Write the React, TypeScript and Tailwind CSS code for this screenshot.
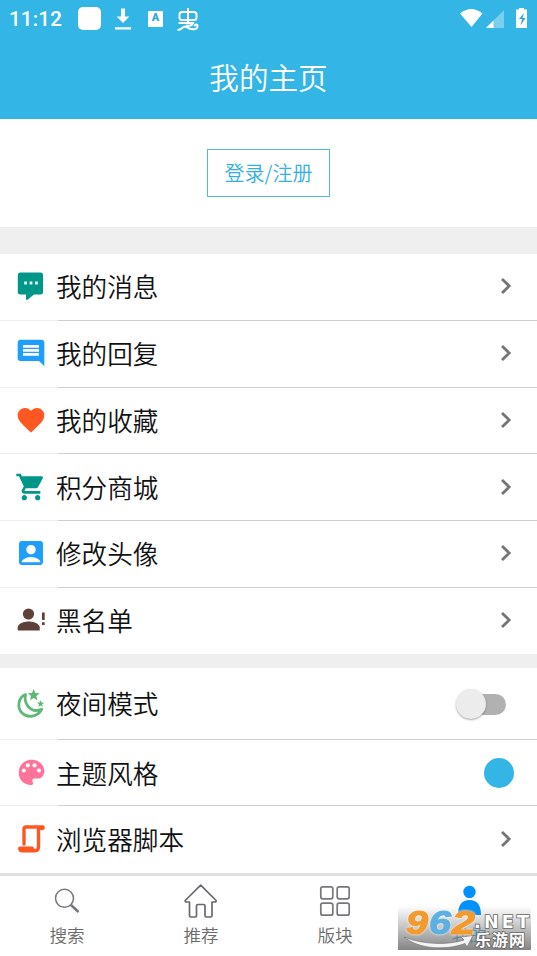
import classNames from "clsx";
import * as React from "react";
import { MdAccountBox, MdComment, MdFavorite, MdShoppingCart } from "react-icons/md";

interface MenuItem {
    label: string;
    icon: React.ReactNode;
    height: string;
    control?: React.ReactNode;
}

const MessageIcon = () => (
    <svg className="size-8" viewBox="0 0 32 32">
        <path
            fill="#009688"
            d="M5 2.500h20.500a2.500 2.500 0 0 1 2.500 2.500v17a2.500 2.500 0 0 1-2.500 2.500H19l-6.500 5.200q-1.300.8-1.500-1V24.500H5.300a2.500 2.500 0 0 1-2.500-2.500v-17A2.500 2.500 0 0 1 5 2.500z"
        />
        <path fill="#e5fffb" d="M9.200 11.500h2.800v3H9.200zM14.600 11.500h2.800v3h-2.800zM20 11.500h2.800v3H20z" />
    </svg>
);

const BlacklistIcon = () => (
    <svg className="size-8" viewBox="0 0 32 32" fill="#5d4037">
        <circle cx="13.500" cy="10" r="5.600" />
        <path d="M2.700 26.500v-3c0-4 6.500-6 11-6s11 2 11 6v3z" />
        <path d="M27 8.500h2.700v7.500H27zM27 18.200h2.700v2.700H27z" />
    </svg>
);

const NightIcon = () => (
    <svg className="size-8" viewBox="0 -2 32 32">
        <path
            d="M10.500 5.500C2.800 8.600 2 19 7 24c5.500 5.200 15.500 4.200 19.700-3.700-5.500 2.200-10.500.9-13.700-3-2.700-3.300-3.400-7.300-2.500-11.800z"
            fill="none"
            stroke="#5fb878"
            strokeWidth="2.800"
            strokeLinejoin="round"
        />
        <path
            fill="#5fb878"
            d="m18.700 0 1.700 3.900 4.300.3-3.300 2.800 1 4.300-3.700-2.300-3.700 2.300 1-4.300-3.200-2.800 4.200-.3zM25.500 11.300l1 2.200 2.500.2-1.900 1.700.6 2.500-2.200-1.400-2.100 1.400.6-2.500-1.900-1.700 2.400-.2z"
        />
    </svg>
);

const PaletteIcon = () => (
    <svg className="size-8" viewBox="0 0 32 32">
        <path
            fill="#ff7299"
            d="M16.500 2.800C9 2.800 3.700 8.500 3.700 15.500c0 7 5.300 12.500 12.300 12.500 2.800 0 2-2.300 1.500-3.600-.7-2 .2-2.900 2-2.900h3.300c4 0 6.500-3.400 6.500-7.300C29.300 7.500 23.500 2.800 16.500 2.800z"
        />
        <g fill="white">
            <circle cx="8.800" cy="13.500" r="2.100" />
            <circle cx="12.800" cy="8.400" r="2.100" />
            <circle cx="19.500" cy="8.400" r="2.100" />
            <circle cx="23.900" cy="13.500" r="2.100" />
        </g>
    </svg>
);

const ScriptIcon = () => (
    <svg
        className="size-8"
        viewBox="0 0 32 32"
        fill="none"
        stroke="#ff5722"
        strokeWidth="3.400"
        strokeLinecap="round"
        strokeLinejoin="round"
    >
        <path d="M9 21V6q0-2 2-2h17" />
        <path d="M28 5.200h-4.500v18.600q0 4-3.500 4-2.500 0-2.800-2.600H4.800q0 2.600 2.500 2.600H20" />
    </svg>
);

const Chevron = () => (
    <svg className="mr-6 h-5 w-4" viewBox="0 0 16 20" fill="none" stroke="#757575" strokeWidth="2.800">
        <path d="m5 3 7.200 7L5 17" />
    </svg>
);

const Switch = () => (
    <div className="relative mr-[31px] mt-[3px] h-[21px] w-[46px] rounded-full bg-[#b1b1b1]">
        <span className="absolute -left-1 -top-[5px] size-[30px] rounded-full bg-[#ececec] shadow-[0_1px_2px_rgba(0,0,0,0.35)]" />
    </div>
);

const accountItems: MenuItem[] = [
    { label: "我的消息", icon: <MessageIcon />, height: "h-[67px] pb-[3px]" },
    { label: "我的回复", icon: <MdComment className="size-8 text-[#1e9fff]" />, height: "h-[67px] pb-[3px]" },
    { label: "我的收藏", icon: <MdFavorite className="size-8 text-[#ff5722]" />, height: "h-[66px] pb-[2px]" },
    { label: "积分商城", icon: <MdShoppingCart className="size-8 text-[#009688]" />, height: "h-[67px] pb-px" },
    { label: "修改头像", icon: <MdAccountBox className="size-8 text-[#1e9fff]" />, height: "h-[67px] pb-[3px]" },
    { label: "黑名单", icon: <BlacklistIcon />, height: "h-[66px] pb-[2px]" }
];

const settingItems: MenuItem[] = [
    { label: "夜间模式", icon: <NightIcon />, height: "h-[72px] pb-[2px]", control: <Switch /> },
    {
        label: "主题风格",
        icon: <PaletteIcon />,
        height: "h-[66px]",
        control: <span className="mr-[23px] size-[30px] rounded-full bg-[#33b5e5]" />
    },
    { label: "浏览器脚本", icon: <ScriptIcon />, height: "h-[67px] pb-[2px]" }
];

const MenuList = ({ items }: { items: MenuItem[] }) => (
    <ul className="bg-white">
        {items.map((item, index) => (
            <li key={item.label}>
                <div className={classNames("flex items-center", item.height, index < items.length - 1 && "-mb-px")}>
                    <span className="ml-[15px] w-8 shrink-0">{item.icon}</span>
                    <span className="ml-[9px] flex-1 text-[25.6px] leading-8 font-[350] text-[#111]">{item.label}</span>
                    {item.control ?? <Chevron />}
                </div>
                {index < items.length - 1 && (
                    <div className="flex h-px">
                        <span className="w-[58px] bg-[#eeeeee]" />
                        <span className="flex-1 bg-[#cfcfcf]" />
                    </div>
                )}
            </li>
        ))}
    </ul>
);

const StatusBar = () => (
    <div className="flex h-[37px] items-center text-white">
        <span className="ml-[9px] w-[69px] pt-px font-[Roboto,sans-serif] text-[20.5px] font-medium tracking-[0.2px]">11:12</span>
        <span className="size-[23px] rounded-[5px] bg-white" />
        <svg className="ml-[14px] h-6 w-[16px]" viewBox="0 0 16 24" fill="white">
            <path d="M6 1.500h4v8h4.400L8 16 1.600 9.500H6zM0 20.200h16V22.400H0z" />
        </svg>
        <span className="ml-[17px] flex h-4 w-[15px] items-center justify-center rounded-[1px] bg-white font-[Roboto,sans-serif] text-[11px] font-black text-[#33a5d8]">
            A
        </span>
        <svg className="ml-[13px] h-6 w-[24px]" viewBox="0 0 24 24" fill="none" stroke="white" strokeWidth="2">
            <rect x="3.500" y="5" width="17" height="8" rx="2.500" />
            <path d="M12 1v14.500M2.500 16h14.500c-1 3.200-4 3.200-7 2.500M1.500 23c5 0 5-5 9-3 4 3 11 3.500 11-1 0-2.200-3-1.800-2.700.3" />
        </svg>
        <svg className="ml-auto mr-[8px] h-[22px] w-[70px]" viewBox="459 7 70 22" fill="white">
            <path d="M460 12.500q11-9 22.500 0L471.500 26z" />
            <path opacity=".35" d="M504 9v18h-18z" />
            <path d="M493.500 19.500V27H486z" />
            <path d="M517 8.500h2V7h5v1.500h3V27h-11V8.500z" />
            <path fill="#33a5d8" d="m524 12-5 6h3l-1.500 6.500 5-7.500h-3z" />
        </svg>
    </div>
);

const SearchIcon = () => (
    <svg className="size-9" viewBox="0 0 36 36" fill="none" stroke="#76767c">
        <circle cx="15.500" cy="15.300" r="9" strokeWidth="1.500" />
        <path d="m22 22 7.500 7" strokeWidth="2.500" />
    </svg>
);

const HomeIcon = () => (
    <svg className="size-9" viewBox="0 0 36 36" fill="none" stroke="#68686e" strokeWidth="1.700" strokeLinejoin="round">
        <path d="M17.700 2.200 2.200 17.500q-.3 1.500 1.500 1.500h2.800v13.500q0 1.500 1.500 1.500h4q1.500 0 1.500-1.500V23q0-1.500 1.500-1.500h5.500q1.500 0 1.500 1.500v9.500q0 1.500 1.500 1.500h4q1.500 0 1.500-1.500V19h2.800q1.600 0 1.300-1.500z" />
    </svg>
);

const GridIcon = () => (
    <svg className="size-9" viewBox="0 0 36 36" fill="none" stroke="#77777d" strokeWidth="1.700">
        <rect x="3.800" y="3.800" width="12" height="12" rx="2" />
        <rect x="20.200" y="3.800" width="12" height="12" rx="2" />
        <rect x="3.800" y="20.200" width="12" height="12" rx="2" />
        <rect x="20.200" y="20.200" width="12" height="12" rx="2" />
    </svg>
);

const UserIcon = () => (
    <svg className="size-9" viewBox="0 0 36 36" fill="#0091ff">
        <circle cx="18.500" cy="9" r="6.200" />
        <path d="M7 32c0-10 4-15 11.500-15S30 22 30 32z" />
    </svg>
);

const tabs = [
    { label: "搜索", icon: <SearchIcon /> },
    { label: "推荐", icon: <HomeIcon /> },
    { label: "版块", icon: <GridIcon /> },
    { label: "我的", icon: <UserIcon />, active: true }
];

const Watermark = () => (
    <svg className="absolute bottom-[6px] right-[6px] h-[46px] w-[133px]" viewBox="398 904 133 46">
        <defs>
            <linearGradient id="shade" x1="0" y1="0" x2="0" y2="1">
                <stop offset="0" stopColor="#777" stopOpacity="0" />
                <stop offset="1" stopColor="#777" stopOpacity=".9" />
            </linearGradient>
        </defs>
        <rect x="398" y="906" width="133" height="44" fill="url(#shade)" />
        <path
            d="M404 937c20 8 45 8 60 3l-3-3 12-1.500-6 11.500-2-3.500c-18 7-46 6-61-6.500z"
            fill="#f4f4f4"
            stroke="#777"
            strokeWidth=".7"
        />
        <g
            className="drop-shadow-[0_0_1px_white]"
            fontFamily="'Liberation Sans', sans-serif"
            fontWeight="700"
            fontStyle="italic"
            fontSize="33"
            strokeWidth="1.200"
        >
            <text x="406" y="934" textLength="22" lengthAdjust="spacingAndGlyphs" fill="#f39a2e" stroke="#f39a2e">9</text>
            <text x="429" y="934" textLength="22" lengthAdjust="spacingAndGlyphs" fill="#5cb0e2" stroke="#5cb0e2">6</text>
            <text x="452" y="934" textLength="23" lengthAdjust="spacingAndGlyphs" fill="#f39a2e" stroke="#f39a2e">2</text>
        </g>
        <g fill="white" stroke="#666" strokeWidth="1.600" paintOrder="stroke" fontWeight="700">
            <text
                x="474"
                y="928"
                textLength="55"
                lengthAdjust="spacing"
                fontFamily="'DejaVu Sans', sans-serif"
                fontSize="17.500"
            >
                .NET
            </text>
            <text x="475" y="946" textLength="50" fontFamily="'Noto Sans CJK SC', sans-serif" fontSize="16">乐游网</text>
        </g>
    </svg>
);

const App = () => (
    <div className="relative flex h-[956px] w-[537px] flex-col overflow-hidden bg-[#efefef] font-['Noto_Sans_CJK_SC',sans-serif]">
        <header className="h-[119px] shrink-0 bg-[#33b5e5]">
            <StatusBar />
            <h1 className="text-center text-[29.6px] leading-[80px] font-[350] text-white">我的主页</h1>
        </header>

        <section className="mb-[27px] flex h-[108px] shrink-0 items-center justify-center bg-white">
            <button className="h-12 w-[123px] border border-[#52b9de] text-[20px] font-[350] text-[#33b0e0]">登录/注册</button>
        </section>

        <MenuList items={accountItems} />
        <div className="h-[14px] shrink-0" />
        <MenuList items={settingItems} />

        <nav className="grid flex-1 grid-cols-4 border-t-[3px] border-[#e0e0e0] bg-white pr-px">
            {tabs.map((tab) => (
                <a key={tab.label} className="flex flex-col items-center pt-[7px]">
                    {tab.icon}
                    <span
                        className={classNames(
                            "mt-1 text-[17.6px] leading-6 font-[350]",
                            tab.active ? "text-[#33a5d8]" : "text-[#6b6b6b]"
                        )}
                    >
                        {tab.label}
                    </span>
                </a>
            ))}
        </nav>

        <Watermark />
    </div>
);

export default App;
